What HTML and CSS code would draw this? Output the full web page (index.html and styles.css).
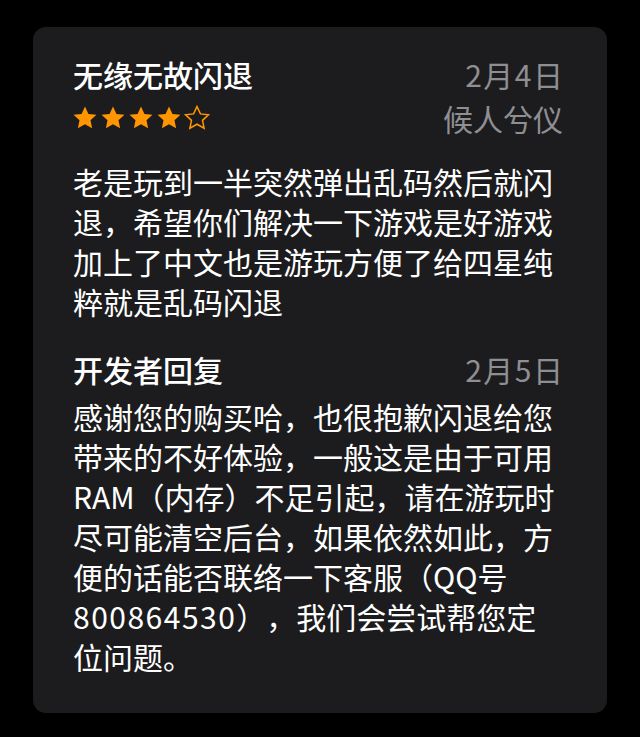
FILE: index.html
```html
<!DOCTYPE html>
<html lang="zh-CN">
<head>
<meta charset="utf-8">
<title>Review</title>
<link rel="stylesheet" href="styles.css">
</head>
<body>
<div class="card">
  <div class="review-head">
    <div class="title">无缘无故闪退</div>
    <div class="date">2月4日</div>
    <div class="stars">
      <svg class="star" viewBox="0 0 24 24"><path class="fill" d="M12 2.2l2.95 6.3 6.85.8-5.08 4.7 1.38 6.8L12 17.35 5.9 20.8l1.38-6.8L2.2 9.3l6.85-.8z"/></svg>
      <svg class="star" viewBox="0 0 24 24"><path class="fill" d="M12 2.2l2.95 6.3 6.85.8-5.08 4.7 1.38 6.8L12 17.35 5.9 20.8l1.38-6.8L2.2 9.3l6.85-.8z"/></svg>
      <svg class="star" viewBox="0 0 24 24"><path class="fill" d="M12 2.2l2.95 6.3 6.85.8-5.08 4.7 1.38 6.8L12 17.35 5.9 20.8l1.38-6.8L2.2 9.3l6.85-.8z"/></svg>
      <svg class="star" viewBox="0 0 24 24"><path class="fill" d="M12 2.2l2.95 6.3 6.85.8-5.08 4.7 1.38 6.8L12 17.35 5.9 20.8l1.38-6.8L2.2 9.3l6.85-.8z"/></svg>
      <svg class="star" viewBox="0 0 24 24"><path class="outline" d="M12 2.2l2.95 6.3 6.85.8-5.08 4.7 1.38 6.8L12 17.35 5.9 20.8l1.38-6.8L2.2 9.3l6.85-.8z"/></svg>
    </div>
    <div class="author">候人兮仪</div>
  </div>
  <p class="body review-body">老是玩到一半突然弹出乱码然后就闪退，希望你们解决一下游戏是好游戏加上了中文也是游玩方便了给四星纯粹就是乱码闪退</p>
  <div class="reply-head">
    <div class="title">开发者回复</div>
    <div class="date">2月5日</div>
  </div>
  <p class="body reply-body">感谢您的购买哈，也很抱歉闪退给您带来的不好体验，一般这是由于可用RAM（内存）不足引起，请在游玩时尽可能清空后台，如果依然如此，方便的话能否联络一下客服（QQ号<span class="num">800864530</span>），我们会尝试帮您定位问题。</p>
</div>
</body>
</html>
```
FILE: styles.css
```css
html, body {
  margin: 0;
  padding: 0;
  background: #000;
}
body {
  padding: 27px 33px 24px 33px;
  font-family: "Noto Sans CJK SC", "Noto Sans", sans-serif;
  color: #fff;
}
.card {
  width: 574px;
  box-sizing: border-box;
  background: #1c1c1e;
  border-radius: 13px;
  padding: 27px 44px 37px 40px;
}
.review-head {
  display: grid;
  grid-template-columns: 1fr auto;
  row-gap: 4px;
  align-items: center;
}
.title {
  font-size: 30px;
  line-height: 40px;
  font-weight: 500;
  color: #fff;
}
.date, .author {
  font-size: 30px;
  line-height: 40px;
  color: #8e8e93;
  text-align: right;
}
.date {
  letter-spacing: 1.5px;
  margin-right: -1.5px;
}
.stars {
  display: flex;
  gap: 0;
  height: 40px;
  align-items: center;
  margin-left: -2px;
}
.star {
  width: 28px;
  height: 28px;
  display: block;
}
.star .fill {
  fill: #ff9500;
}
.star .outline {
  fill: none;
  stroke: #ff9500;
  stroke-width: 1.3;
  stroke-linejoin: miter;
}
.body {
  margin: 0;
  font-size: 30px;
  line-height: 40px;
  color: #fff;
  line-break: strict;
  text-spacing-trim: space-all;
}
.num {
  letter-spacing: 1.5px;
}
.review-body {
  margin-top: 23px;
}
.reply-head {
  display: flex;
  justify-content: space-between;
  margin-top: 28px;
}
.reply-body {
  margin-top: 7px;
}
```
